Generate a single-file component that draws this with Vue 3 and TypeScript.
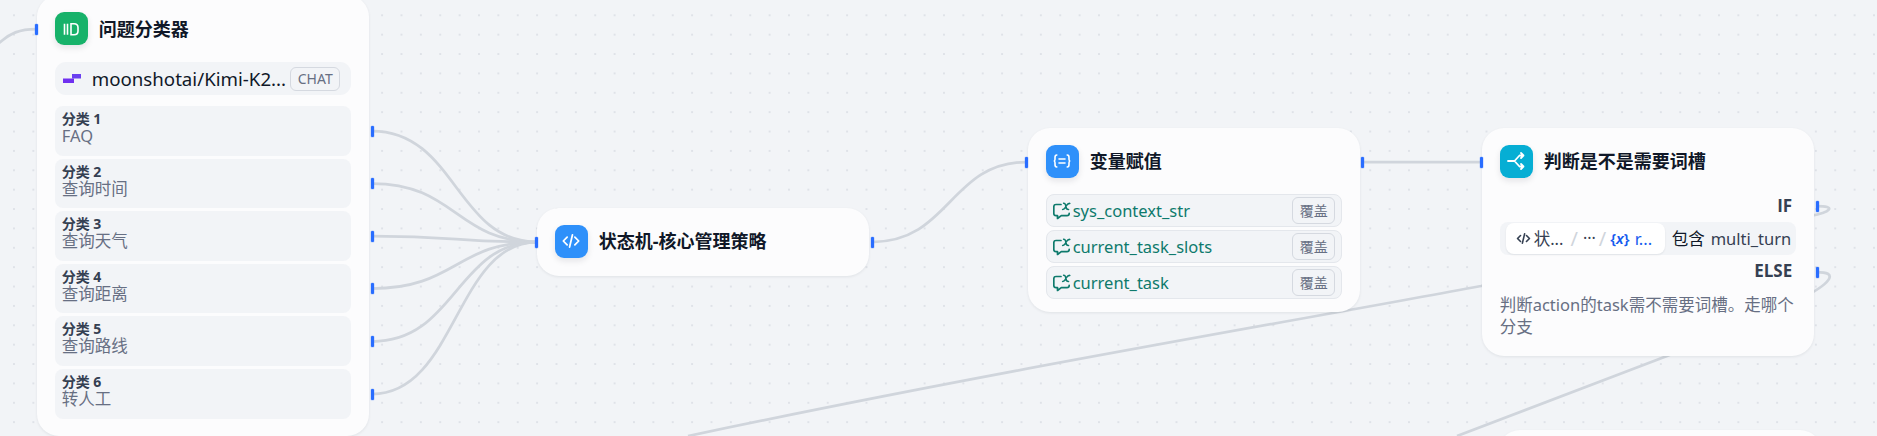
<script setup lang="ts">
const classes = [
  { label: '分类 1', text: 'FAQ', y: 131 },
  { label: '分类 2', text: '查询时间', y: 183.5 },
  { label: '分类 3', text: '查询天气', y: 236 },
  { label: '分类 4', text: '查询距离', y: 288.5 },
  { label: '分类 5', text: '查询路线', y: 341.5 },
  { label: '分类 6', text: '转人工', y: 394 },
]

const assigns = ['sys_context_str', 'current_task_slots', 'current_task']

const handles = [
  { x: 34.5, y: 29 },
  ...classes.map((c) => ({ x: 370.5, y: c.y })),
  { x: 534.5, y: 242 },
  { x: 870.5, y: 242 },
  { x: 1025, y: 162 },
  { x: 1361, y: 162 },
  { x: 1479.5, y: 162 },
  { x: 1815.5, y: 206 },
  { x: 1815.5, y: 272 },
]

const edgeToHandle = (y: number) => `M372 ${y} C456 ${y} 456 242 537 242`
</script>

<template>
  <div class="canvas">
    <svg class="edges" width="1877" height="436" viewBox="0 0 1877 436" fill="none">
      <path d="M-2 44 C10 33 20 29 36 29" />
      <path v-for="c in classes" :key="c.label" :d="edgeToHandle(c.y)" />
      <path d="M872 242 C950 242 950 162 1027 162" />
      <path d="M1362 162 L1482 162" />
      <path d="M1817 206 C1836 206 1832 212 1810 216 L1481 286 C1300 320 1000 370 688 436" />
      <path d="M1817 272 C1838 272 1832 282 1806 296 C1760 320 1700 342 1667 356 L1457 436" />
    </svg>

    <div
      v-for="h in handles"
      :key="`${h.x}-${h.y}`"
      class="handle"
      :style="{ left: `${h.x}px`, top: `${h.y - 5.5}px` }"
    ></div>

    <section class="node classifier">
      <header class="node-head">
        <span class="icon green">
          <svg width="22" height="22" viewBox="0 0 22 22" fill="none" stroke="#fff" stroke-width="1.6">
            <path d="M4.5 5.8V16.8M7.5 5.8V16.8M11 5.8H14C16.6 5.8 18 7.4 18 9.6V13C18 15.2 16.6 16.8 14 16.8H11Z" />
          </svg>
        </span>
        <h3>问题分类器</h3>
      </header>
      <div class="model">
        <svg class="kimi" width="18" height="9" viewBox="0 0 18 9">
          <rect x="0" y="4.5" width="11" height="4.5" fill="#7030f0" />
          <rect x="9" y="0" width="9" height="4.5" fill="#6a40f0" />
        </svg>
        <span class="model-name">moonshotai/Kimi-K2...</span>
        <span class="badge">CHAT</span>
      </div>
      <div class="class-list">
        <div v-for="c in classes" :key="c.label" class="class-row">
          <div class="class-label">{{ c.label }}</div>
          <div class="class-text">{{ c.text }}</div>
        </div>
      </div>
    </section>

    <section class="node code">
      <header class="node-head">
        <span class="icon blue">
          <svg width="22" height="22" viewBox="0 0 20 20" fill="none" stroke="#fff" stroke-width="1.6" stroke-linecap="round" stroke-linejoin="round">
            <path d="M6.5 6.5L3 10L6.5 13.5M13.5 6.5L17 10L13.5 13.5M11.3 4.5L8.7 15.5" />
          </svg>
        </span>
        <h3>状态机-核心管理策略</h3>
      </header>
    </section>

    <section class="node assigner">
      <header class="node-head">
        <span class="icon blue">
          <svg width="22" height="22" viewBox="0 0 22 22" fill="none" stroke="#fff" stroke-width="1.6" stroke-linecap="round">
            <path d="M5.8 5C4.2 5 4 6 4 7.5V9.2C4 10.2 3.5 11 2.7 11C3.5 11 4 11.8 4 12.8V14.5C4 16 4.2 17 5.8 17" />
            <path d="M16.2 5C17.8 5 18 6 18 7.5V9.2C18 10.2 18.5 11 19.3 11C18.5 11 18 11.8 18 12.8V14.5C18 16 17.8 17 16.2 17" />
            <path d="M8 9H14M8 13H14" />
          </svg>
        </span>
        <h3>变量赋值</h3>
      </header>
      <div class="assign-list">
        <div v-for="name in assigns" :key="name" class="assign-row">
          <svg class="var-icon" width="18" height="18" viewBox="0 0 18 18" fill="none" stroke="#0e7a6c" stroke-width="1.7" stroke-linecap="round" stroke-linejoin="round">
            <path d="M8 2.5H3C1.6 2.5 0.8 3.3 0.8 4.7V11.5C0.8 12.8 1.6 13.6 3 13.6H4.5V16.5L8.3 13.6H14C15.4 13.6 16.2 12.8 16.2 11.4" />
            <path d="M10.6 1.2C11.8 1.1 12.2 1.8 12.5 2.8L13.2 5.8C13.5 6.9 14 7.6 15.6 7.4M16.8 1.4C15.4 1.2 14.4 2 13.4 3.6L12.4 5.4C11.6 6.8 11 7.5 9.6 7.4" stroke-width="1.5" />
          </svg>
          <span class="var-name">{{ name }}</span>
          <span class="overwrite">覆盖</span>
        </div>
      </div>
    </section>

    <section class="node branch">
      <header class="node-head">
        <span class="icon cyan">
          <svg width="22" height="22" viewBox="0 0 22 22" fill="none" stroke="#fff" stroke-width="1.8" stroke-linecap="round" stroke-linejoin="round">
            <path d="M3 11H9.5L14.5 5.5H18.5M9.5 11L14.5 16.5H18.5M16 3L18.5 5.5L16 8M16 14L18.5 16.5L16 19" />
          </svg>
        </span>
        <h3>判断是不是需要词槽</h3>
      </header>
      <div class="case-label">IF</div>
      <div class="condition">
        <div class="var-chip">
          <svg width="17" height="17" viewBox="0 0 20 20" fill="none" stroke="#354052" stroke-width="1.9" stroke-linecap="round" stroke-linejoin="round">
            <path d="M6.5 6.5L3 10L6.5 13.5M13.5 6.5L17 10L13.5 13.5M11.3 4.5L8.7 15.5" />
          </svg>
          <span class="chip-node">状...</span>
          <span class="slash first">/</span>
          <span class="dots">···</span>
          <span class="slash">/</span>
          <span class="chip-var">{<i>x</i>}</span>
          <span class="chip-name">r...</span>
        </div>
        <span class="op">包含</span>
        <span class="value">multi_turn</span>
      </div>
      <div class="case-label else">ELSE</div>
      <p class="desc">判断action的task需不需要词槽。走哪个分支</p>
    </section>

    <section class="node peek"></section>
  </div>
</template>

<style>
html,
body {
  margin: 0;
  background: #f2f4f7;
}
</style>

<style scoped>
.canvas {
  position: relative;
  width: 1877px;
  height: 436px;
  overflow: hidden;
  background-color: #f2f4f7;
  background-image: radial-gradient(circle, #dfe2e8 1.1px, transparent 1.3px);
  background-size: 19.38px 19.38px;
  background-position: 4.3px 5.6px;
  font-family: "Noto Sans", "Noto Sans CJK SC", sans-serif;
}

.edges {
  position: absolute;
  left: 0;
  top: 0;
}

.edges path {
  stroke: #d0d5dc;
  stroke-width: 2.75;
}

.handle {
  position: absolute;
  width: 3px;
  height: 11px;
  background: #296dff;
  border-radius: 1px;
  box-shadow: 0 0 0 0.5px rgba(41, 109, 255, 0.3);
  z-index: 2;
}

.node {
  position: absolute;
  box-sizing: border-box;
  width: 332.5px;
  padding: 17px 18px 0;
  background: #fcfcfd;
  border-radius: 22px;
  box-shadow: 0 1px 3px rgba(16, 24, 40, 0.08);
}

.classifier {
  left: 36.7px;
  top: -5px;
  height: 441px;
}

.code {
  left: 536.7px;
  top: 207.7px;
  height: 68.3px;
}

.assigner {
  left: 1027.7px;
  top: 127.5px;
  height: 184.5px;
}

.branch {
  left: 1481.7px;
  top: 127.5px;
  height: 228.5px;
}

.peek {
  left: 1498px;
  top: 430px;
  width: 324px;
  height: 60px;
}

.node-head {
  display: flex;
  align-items: center;
  gap: 11px;
  height: 33px;
}

.node-head h3 {
  margin: 0;
  font-size: 18px;
  font-weight: 700;
  line-height: 24px;
  color: #101828;
}

.icon {
  display: flex;
  align-items: center;
  justify-content: center;
  width: 33px;
  height: 33px;
  border-radius: 9px;
  box-shadow: 0 3px 6px rgba(16, 24, 40, 0.1);
}

.green {
  background: #17b26a;
}

.blue {
  background: #2e90fa;
}

.cyan {
  background: #06aed4;
}

.model {
  display: flex;
  align-items: center;
  height: 33px;
  margin-top: 17px;
  padding: 0 11px 0 8px;
  background: #f2f4f7;
  border-radius: 11px;
}

.kimi {
  flex: none;
  margin-right: 11px;
}

.model-name {
  flex: 1;
  font-size: 18.7px;
  color: #101828;
  white-space: nowrap;
}

.badge {
  box-sizing: border-box;
  width: 50px;
  height: 24px;
  border: 1px solid #d5d9e0;
  border-radius: 6px;
  font-size: 14px;
  line-height: 22px;
  text-align: center;
  color: #676f83;
}

.class-list {
  display: flex;
  flex-direction: column;
  gap: 3px;
  margin-top: 11px;
}

.class-row {
  box-sizing: border-box;
  height: 49.6px;
  padding: 5px 7px 0;
  background: #f2f4f7;
  border-radius: 8px;
}

.class-label {
  font-size: 14px;
  font-weight: 700;
  line-height: 15px;
  color: #354052;
}

.class-text {
  font-size: 16.5px;
  line-height: 20px;
  color: #676f83;
}

.assign-list {
  display: flex;
  flex-direction: column;
  gap: 3px;
  margin-top: 16.5px;
}

.assign-row {
  box-sizing: border-box;
  display: flex;
  align-items: center;
  height: 33px;
  padding: 0 6px;
  background: #f2f4f7;
  border: 1px solid #e4e7ec;
  border-radius: 8px;
}

.var-icon {
  flex: none;
  margin-right: 2px;
}

.var-name {
  flex: 1;
  font-size: 16.5px;
  line-height: 20px;
  color: #0e7a6c;
}

.overwrite {
  box-sizing: border-box;
  width: 43px;
  height: 27px;
  border: 1px solid #d5d9e0;
  border-radius: 6px;
  font-size: 14px;
  line-height: 25px;
  text-align: center;
  color: #676f83;
}

.case-label {
  margin-top: 17px;
  padding-right: 4px;
  font-family: "Open Sans", "Noto Sans CJK SC", sans-serif;
  font-size: 17px;
  font-weight: 700;
  line-height: 22px;
  text-align: right;
  color: #354052;
}

.condition {
  display: flex;
  align-items: center;
  height: 33px;
  margin-top: 5px;
  padding: 0 0 0 6px;
  background: #f2f4f7;
  border-radius: 8px;
  white-space: nowrap;
}

.var-chip {
  box-sizing: border-box;
  flex: none;
  display: flex;
  align-items: center;
  width: 159px;
  height: 31px;
  padding: 0 0 0 9px;
  background: #fff;
  border-radius: 8px;
  box-shadow: 0 1px 2px rgba(16, 24, 40, 0.08);
  font-size: 16.5px;
}

.chip-node {
  margin-left: 2px;
  color: #354052;
}

.slash {
  margin-left: 3px;
  font-size: 20px;
  color: #d0d5dc;
}

.slash.first {
  margin-left: 7px;
}

.dots {
  margin-left: 5px;
  color: #354052;
  font-size: 16px;
}

.chip-var {
  margin-left: 4px;
  font-size: 15px;
  font-weight: 600;
  color: #155aef;
}

.chip-name {
  margin-left: 5px;
  color: #155aef;
}

.op {
  margin-left: 7px;
  font-size: 16.5px;
  color: #101828;
}

.value {
  margin-left: 6px;
  font-size: 16.5px;
  color: #354052;
}

.else {
  margin-top: 5px;
}

.desc {
  margin: 12px 0 0;
  font-size: 16.5px;
  line-height: 22px;
  color: #676f83;
}
</style>
